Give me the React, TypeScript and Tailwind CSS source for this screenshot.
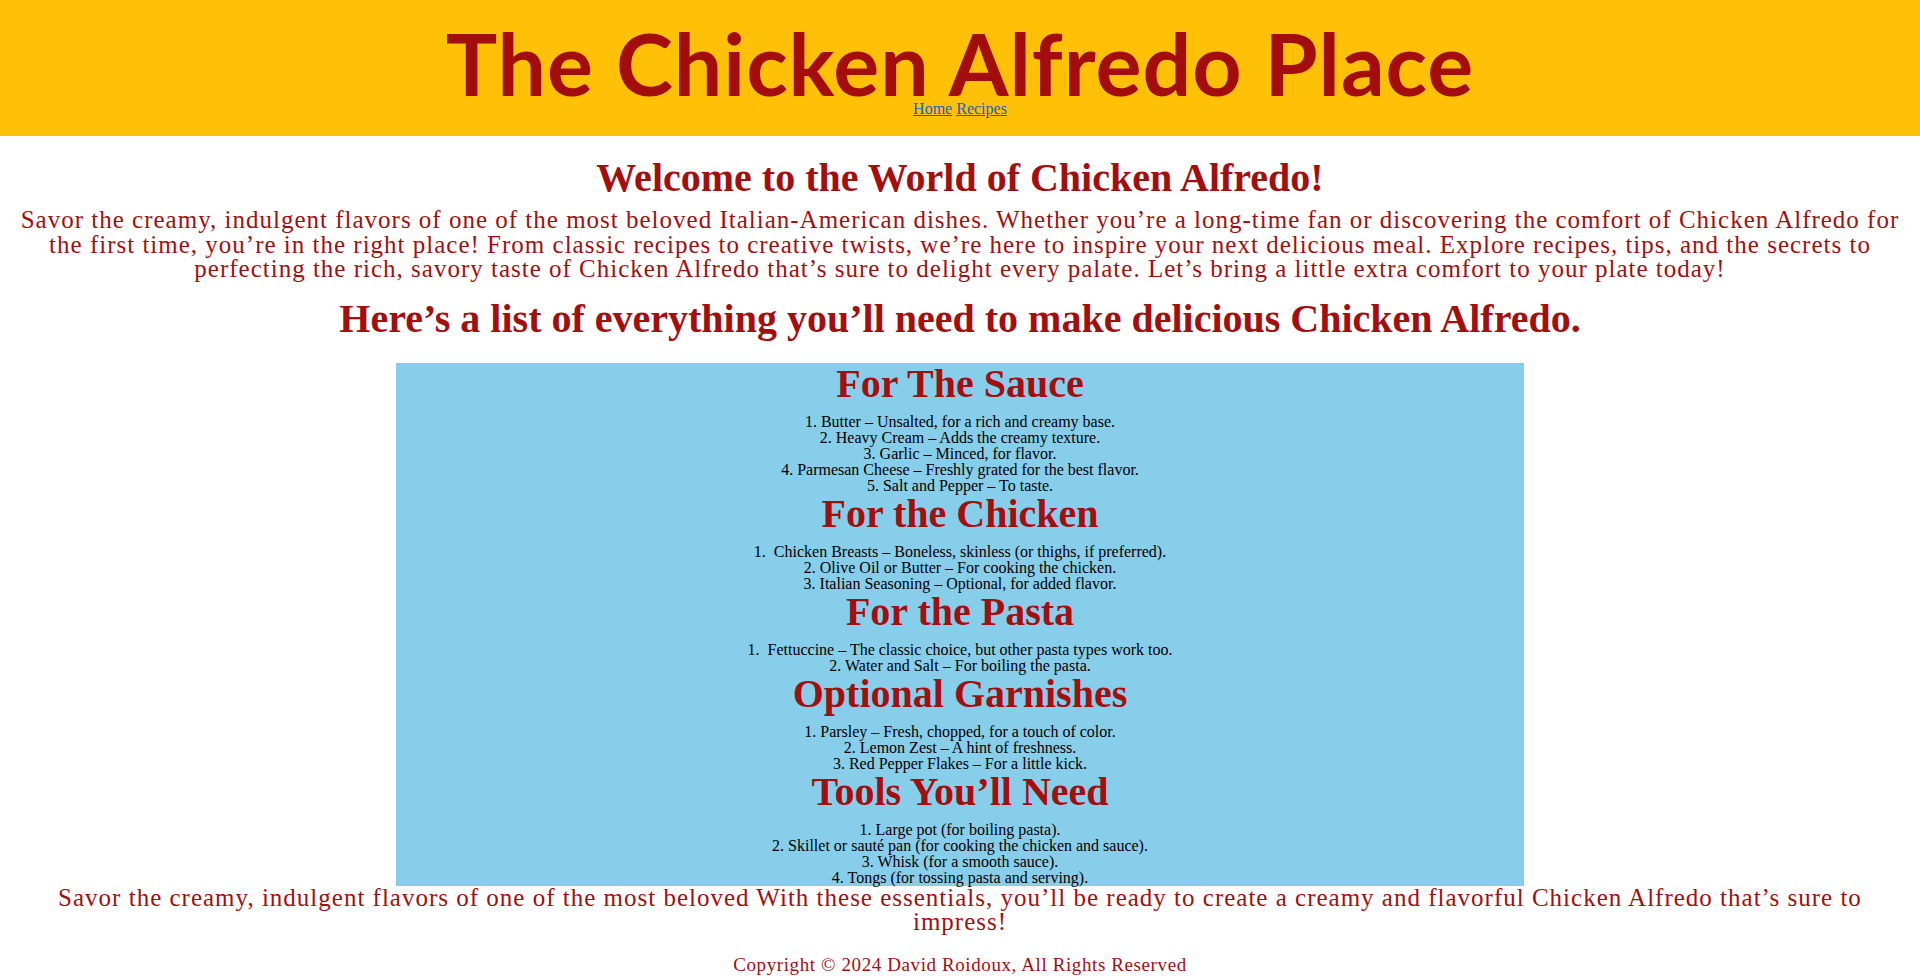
const sections = [
  {
    title: 'For The Sauce',
    items: [
      '1. Butter – Unsalted, for a rich and creamy base.',
      '2. Heavy Cream – Adds the creamy texture.',
      '3. Garlic – Minced, for flavor.',
      '4. Parmesan Cheese – Freshly grated for the best flavor.',
      '5. Salt and Pepper – To taste.',
    ],
  },
  {
    title: 'For the Chicken',
    items: [
      '1.\u00a0 Chicken Breasts – Boneless, skinless (or thighs, if preferred).',
      '2. Olive Oil or Butter – For cooking the chicken.',
      '3. Italian Seasoning – Optional, for added flavor.',
    ],
  },
  {
    title: 'For the Pasta',
    items: [
      '1.\u00a0 Fettuccine – The classic choice, but other pasta types work too.',
      '2. Water and Salt – For boiling the pasta.',
    ],
  },
  {
    title: 'Optional Garnishes',
    items: [
      '1. Parsley – Fresh, chopped, for a touch of color.',
      '2. Lemon Zest – A hint of freshness.',
      '3. Red Pepper Flakes – For a little kick.',
    ],
  },
  {
    title: 'Tools You’ll Need',
    items: [
      '1. Large pot (for boiling pasta).',
      '2. Skillet or sauté pan (for cooking the chicken and sauce).',
      '3. Whisk (for a smooth sauce).',
      '4. Tongs (for tossing pasta and serving).',
    ],
  },
];

export default function App() {
  return (
    <div className="min-h-screen bg-white font-['Liberation_Serif',serif] text-[#a50e0e]">
      {/* Header */}
      <header className="bg-[#ffc107] flex flex-col items-center pt-[25px] pb-[18px]">
        <h1 className="font-['Comic_Sans_MS','Lato',sans-serif] font-bold text-[86px] leading-[75px] tracking-[1px] text-[#a30d0d]">
          The Chicken Alfredo Place
        </h1>
        <nav className="text-[16px] leading-[18px] flex gap-[4px]">
          <a href="#" className="text-[#1a5fc4] underline">Home</a>
          <a href="#" className="text-[#1a5fc4] underline">Recipes</a>
        </nav>
      </header>

      <main className="flex flex-col items-center">
        <h2 className="mt-[19px] text-[40px] leading-[46px] font-bold">
          Welcome to the World of Chicken Alfredo!
        </h2>
        <p className="mt-[7px] w-[1904px] text-center text-[25px] leading-[24.5px] tracking-[1px]">
          Savor the creamy, indulgent flavors of one of the most beloved Italian-American dishes. Whether you’re a long-time fan or discovering the comfort of Chicken Alfredo for the first time, you’re in the right place! From classic recipes to creative twists, we’re here to inspire your next delicious meal. Explore recipes, tips, and the secrets to perfecting the rich, savory taste of Chicken Alfredo that’s sure to delight every palate. Let’s bring a little extra comfort to your plate today!
        </p>
        <h2 className="mt-[14px] text-[40px] leading-[46px] font-bold">
          Here’s a list of everything you’ll need to make delicious Chicken Alfredo.
        </h2>

        {/* Ingredient box */}
        <div className="mt-[21px] w-[1128px] bg-[#87ceeb] pt-px flex flex-col items-center text-center">
          {sections.map((s) => (
            <section key={s.title} className="flex flex-col items-center">
              <h3 className="text-[40px] leading-[40px] font-bold">{s.title}</h3>
              <ol className="mt-[10px] text-black text-[16px] leading-[16px]">
                {s.items.map((it) => (
                  <li key={it}>{it}</li>
                ))}
              </ol>
            </section>
          ))}
        </div>

        <p className="w-[1820px] text-center text-[25px] leading-[24px] tracking-[1px]">
          Savor the creamy, indulgent flavors of one of the most beloved With these essentials, you’ll be ready to create a creamy and flavorful Chicken Alfredo that’s sure to impress!
        </p>
        <footer className="mt-[21px] text-[19px] leading-[20px] tracking-[0.6px]">
          Copyright © 2024 David Roidoux, All Rights Reserved
        </footer>
      </main>
    </div>
  );
}
